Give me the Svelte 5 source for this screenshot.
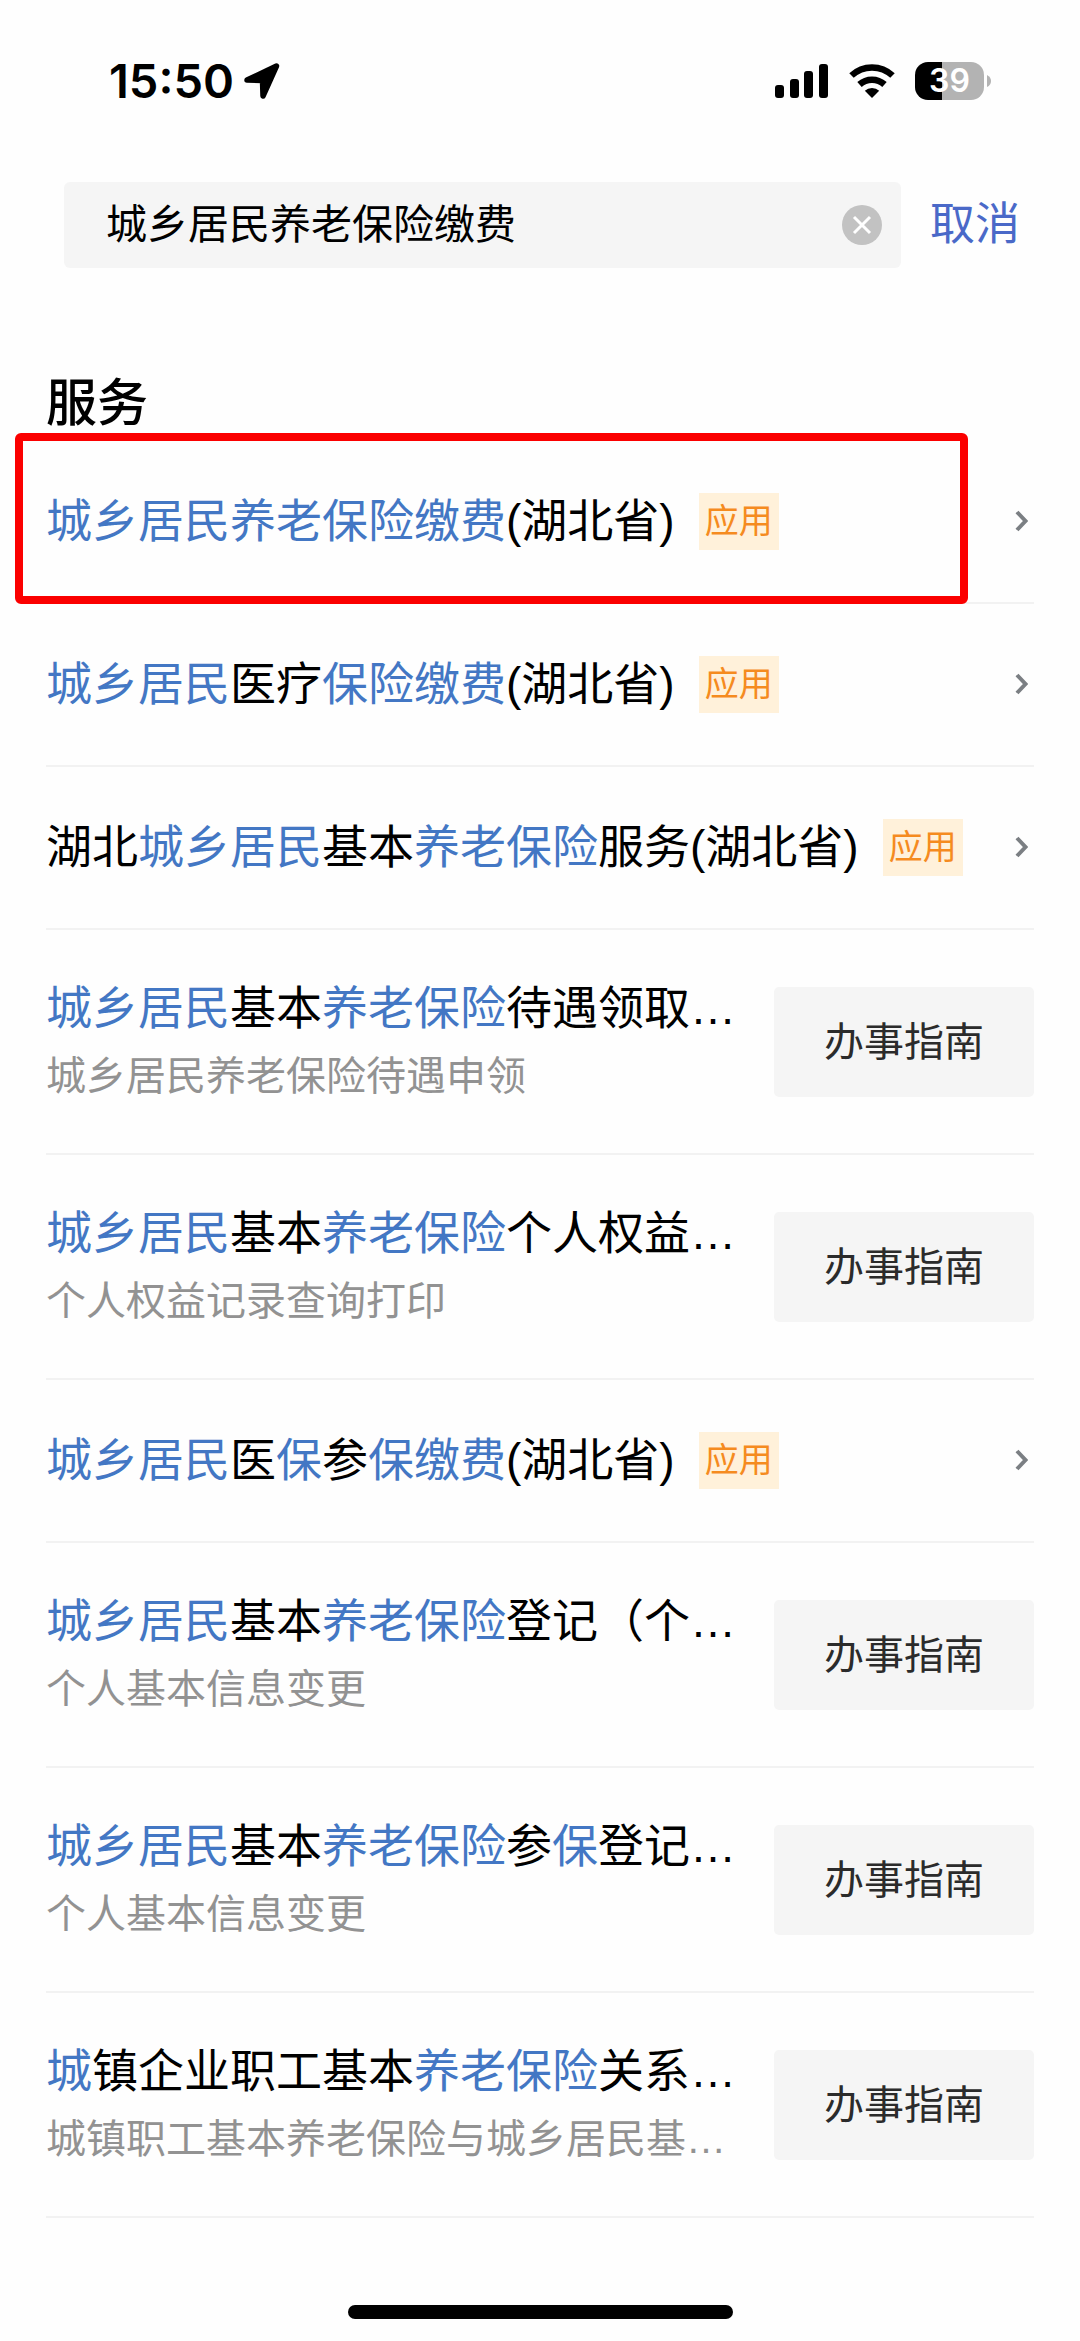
<script lang="ts">
	let query = '城乡居民养老保险缴费';

	// type: 'app' | 'guide'
	const results = [
		{ type: 'app', title: '城乡居民养老保险缴费(湖北省)', marked: true },
		{ type: 'app', title: '城乡居民医疗保险缴费(湖北省)' },
		{ type: 'app', title: '湖北城乡居民基本养老保险服务(湖北省)' },
		{ type: 'guide', title: '城乡居民基本养老保险待遇领取…', desc: '城乡居民养老保险待遇申领' },
		{ type: 'guide', title: '城乡居民基本养老保险个人权益…', desc: '个人权益记录查询打印' },
		{ type: 'app', title: '城乡居民医保参保缴费(湖北省)' },
		{ type: 'guide', title: '城乡居民基本养老保险登记（个…', desc: '个人基本信息变更' },
		{ type: 'guide', title: '城乡居民基本养老保险参保登记…', desc: '个人基本信息变更' },
		{ type: 'guide', title: '城镇企业职工基本养老保险关系…', desc: '城镇职工基本养老保险与城乡居民基…' }
	];

	const keywords = query;

	// split a title into runs, hit = chars that appear in the keywords
	function highlight(title: string) {
		const runs: { text: string, hit: boolean }[] = [];
		for (const char of title) {
			const hit = keywords.includes(char);
			const last = runs[runs.length - 1];
			if (last && last.hit === hit) {
				last.text += char;
			} else {
				runs.push({ text: char, hit });
			}
		}
		return runs;
	}

	function clearQuery() {
		query = '';
	}
</script>

<div class="page">
	<header class="status-bar">
		<div class="clock">
			<span>15:50</span>
			<svg width="36" height="36" viewBox="0 0 36 36" aria-hidden="true">
				<path d="M3 17 L32.5 3 L19 33 L18.5 17.5 Z" fill="#000" stroke="#000" stroke-width="5.5" stroke-linejoin="round" />
			</svg>
		</div>
		<div class="indicators">
			<svg width="54" height="36" viewBox="0 0 54 36" aria-hidden="true">
				<rect x="0" y="22" width="9" height="13" rx="3" />
				<rect x="15" y="16" width="9" height="19" rx="3" />
				<rect x="29" y="8" width="9" height="27" rx="3" />
				<rect x="44" y="1" width="9" height="34" rx="3" />
			</svg>
			<svg width="46" height="36" viewBox="0 0 46 36" aria-hidden="true">
				<g fill="none" stroke="#000" stroke-width="6.5">
					<path d="M2.500 12.500 A30 30 0 0 1 43.500 12.500" />
					<path d="M10.500 21.500 A18.500 18.500 0 0 1 35.500 21.500" />
				</g>
				<path d="M23 35 L15.800 27.800 A10.500 10.500 0 0 1 30.200 27.800 Z" />
			</svg>
			<div class="battery">
				<span class="level">39</span>
				<svg width="4" height="12" viewBox="0 0 4 12" aria-hidden="true">
					<path d="M0 0 Q4 2 4 6 Q4 10 0 12 Z" fill="#b3b3b3" />
				</svg>
			</div>
		</div>
	</header>

	<form class="search" on:submit|preventDefault>
		<div class="search-box">
			<input type="text" aria-label="搜索" bind:value={query} />
			<button type="button" class="clear" aria-label="清空" on:click={clearQuery}>
				<svg width="40" height="40" viewBox="0 0 40 40" aria-hidden="true">
					<circle cx="20" cy="20" r="20" fill="#c2c2c2" />
					<path d="M12 12 L28 28 M28 12 L12 28" stroke="#fff" stroke-width="3" />
				</svg>
			</button>
		</div>
		<button type="button" class="cancel">取消</button>
	</form>

	<main>
		<h2>服务</h2>
		<ul>
			{#each results as item}
				<li class="row" class:marked={item.marked}>
					{#if item.type === 'app'}
						<a class="app" href="#app">
							<span class="title">
								{#each highlight(item.title) as run}<span class:hit={run.hit}>{run.text}</span>{/each}
							</span>
							<span class="tag">应用</span>
							<svg class="chevron" width="13" height="22" viewBox="0 0 13 22" aria-hidden="true">
								<path d="M2 2 L10.500 11 L2 20" fill="none" stroke="#7b7f83" stroke-width="4" />
							</svg>
						</a>
					{:else}
						<div class="text">
							<span class="title">
								{#each highlight(item.title) as run}<span class:hit={run.hit}>{run.text}</span>{/each}
							</span>
							<span class="desc">{item.desc}</span>
						</div>
						<button type="button" class="guide">办事指南</button>
					{/if}
				</li>
			{/each}
		</ul>
	</main>

	<div class="home-bar"></div>
</div>

<style>
	:global(body) {
		background: #fefefe;
	}

	.page {
		display: flex;
		flex-direction: column;
		min-height: 100vh;
		box-sizing: border-box;
		padding-bottom: 22px;
		font-family: "Liberation Sans", "Noto Sans CJK SC", sans-serif;
		color: #000;
	}

	button,
	input {
		border: none;
		padding: 0;
		background: none;
		font-family: inherit;
	}

	.status-bar {
		display: flex;
		align-items: center;
		justify-content: space-between;
		height: 161px;
		padding: 0 89px 0 109px;
		font-family: Inter, sans-serif;
		font-weight: 600;
	}

	.clock {
		display: flex;
		align-items: center;
		gap: 10px;
		font-size: 47px;
	}

	.indicators {
		display: flex;
		align-items: center;
		gap: 20px;
	}

	.battery {
		display: flex;
		align-items: center;
		gap: 3px;
	}

	.level {
		width: 69px;
		border-radius: 13px;
		background: linear-gradient(to right, #000 39%, #b3b3b3 39%);
		color: #fff;
		font-size: 32px;
		line-height: 38px;
		text-align: center;
	}

	.search {
		display: flex;
		align-items: center;
		gap: 29px;
		margin-top: 21px;
		padding: 0 60px 0 64px;
	}

	.search-box {
		flex: 1;
		display: flex;
		align-items: center;
		height: 86px;
		padding: 0 19px 0 42px;
		border-radius: 6px;
		background: #f5f5f5;
	}

	.search-box input {
		flex: 1;
		min-width: 0;
		font-size: 41px;
		line-height: 60px;
		color: #000;
		outline: none;
	}

	.clear svg {
		display: block;
	}

	.cancel {
		color: #4a69c8;
		font-size: 45px;
		line-height: 60px;
	}

	main {
		padding: 0 46px;
	}

	h2 {
		margin: 99px 0 0;
		font-size: 51px;
		font-weight: 500;
		line-height: 74px;
	}

	ul {
		margin: 0;
		padding: 0;
		list-style: none;
	}

	.row {
		position: relative;
		display: flex;
		align-items: center;
		justify-content: space-between;
		border-bottom: 2px solid #f2f2f2;
	}

	.app {
		flex: 1;
		display: flex;
		align-items: center;
		padding: 45px 6px 46px 0;
		color: inherit;
		text-decoration: none;
	}

	.title {
		font-size: 46px;
		line-height: 70px;
		white-space: nowrap;
	}

	.hit {
		color: #4377c4;
	}

	.tag {
		margin-left: 24px;
		padding: 0 6px;
		background: #fff1da;
		color: #f58b1f;
		font-size: 34px;
		line-height: 57px;
	}

	.chevron {
		margin-left: auto;
	}

	.text {
		display: flex;
		flex-direction: column;
		padding: 43px 0 44px;
	}

	.desc {
		color: #929292;
		font-size: 40px;
		line-height: 66px;
		white-space: nowrap;
	}

	.guide {
		padding: 0 50px;
		border-radius: 5px;
		background: #f5f5f5;
		color: #2b2b2b;
		font-size: 40px;
		line-height: 110px;
	}

	/* red frame drawn over the first result */
	.marked::after {
		content: '';
		position: absolute;
		top: -8px;
		right: 66px;
		bottom: -2px;
		left: -31px;
		border: 8px solid #fb0000;
		border-radius: 6px;
		pointer-events: none;
	}

	.home-bar {
		width: 385px;
		height: 14px;
		margin: auto auto 0;
		border-radius: 7px;
		background: #000;
	}
</style>
